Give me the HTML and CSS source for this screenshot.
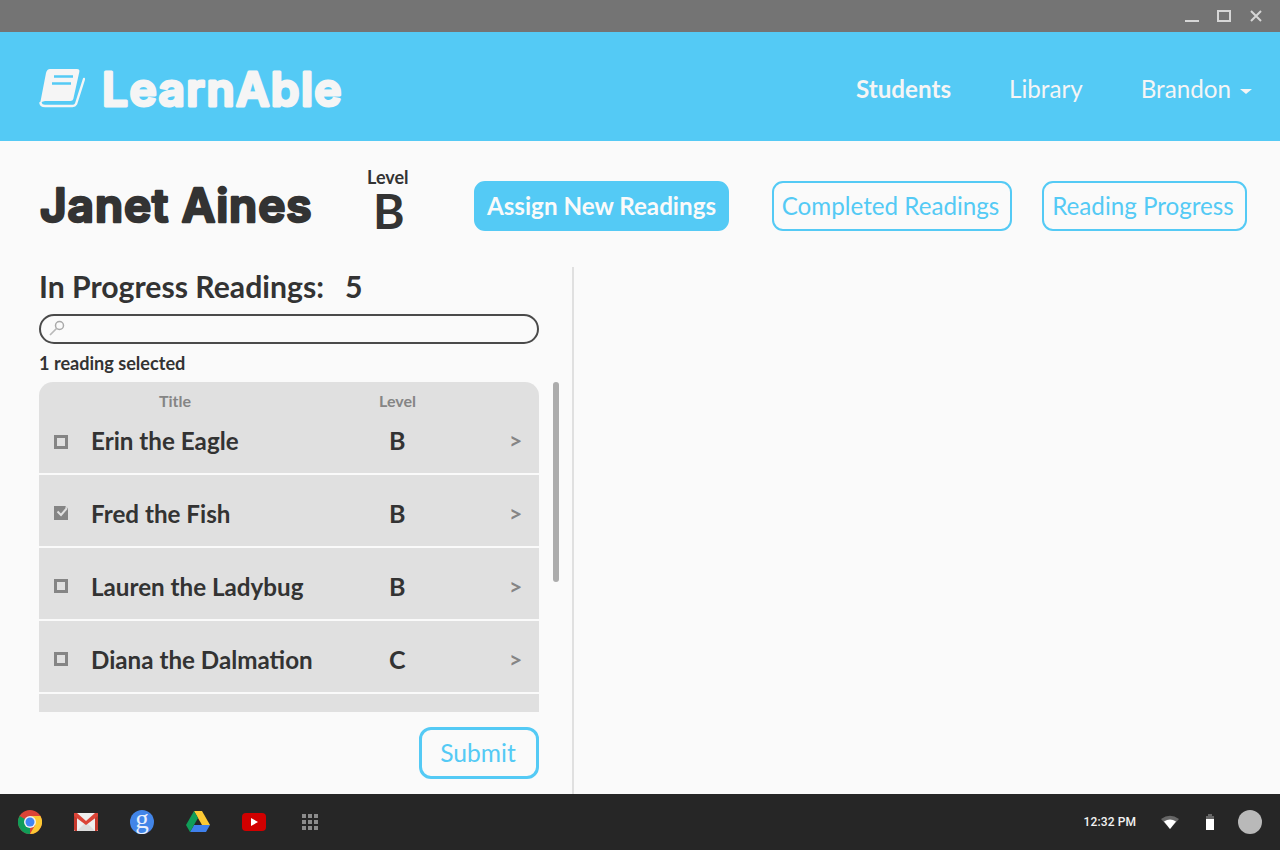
FILE: index.html
```html
<!DOCTYPE html>
<html lang="en">
  <head>
    <meta charset="UTF-8" />
    <title>LearnAble</title>
    <link rel="stylesheet" href="styles.css">
  </head>
  <body>
    <div class="titlebar">
      <span class="win-min"></span>
      <span class="win-max"></span>
      <svg class="win-close" width="12" height="12" viewBox="0 0 12 12"><path d="M1 1l10 10M11 1L1 11" stroke="#d6d6d6" stroke-width="2"/></svg>
    </div>

    <header class="topbar">
      <div class="brand">
        <svg class="brand-icon" width="46" height="40" viewBox="0 0 46 40">
          <path d="M11 1h27q3 0 2.300 3l-6 27q-.5 2-3 2H6q-3 0-5 3L7 5q1-4 4-4z" fill="#f5f5f5"/>
          <path d="M15 8.500h19M13 15.500h19" stroke="#54caf5" stroke-width="2.400"/>
          <path d="M45 11l-8 25q-1 2-3.500 2H6q-4 0-4.500-3" fill="none" stroke="#f5f5f5" stroke-width="2.400" stroke-linecap="round"/>
        </svg>
        <svg class="brand-name" width="250" height="64"><text x="2" y="51">LearnAble</text></svg>
      </div>
      <nav class="nav">
        <a class="nav-active">Students</a>
        <a>Library</a>
        <a>Brandon<i class="caret"></i></a>
      </nav>
    </header>

    <main class="content">
      <section class="student">
        <h1 class="student-name">
          <svg width="328" height="64"><text x="1" y="48">Janet Aines</text></svg>
        </h1>
        <div class="student-level">
          <span>Level</span>
          <b>B</b>
        </div>
        <button class="btn btn-filled btn-assign">Assign New Readings</button>
        <button class="btn btn-completed">Completed Readings</button>
        <button class="btn btn-progress">Reading Progress</button>
      </section>

      <div class="columns">
        <section class="readings">
          <h2 class="readings-title">In Progress Readings:<span>5</span></h2>
          <div class="search">
            <svg width="18" height="18" viewBox="0 0 18 18"><circle cx="11.500" cy="6.500" r="4" fill="none" stroke="#a9a9a9" stroke-width="1.500"/><path d="M8.500 9.500L2 16" stroke="#b9b9b9" stroke-width="1.700"/></svg>
          </div>
          <p class="selected-count">1 reading selected</p>

          <div class="list-wrap">
            <div class="list">
              <div class="row row-first">
                <div class="list-head"><span class="head-title">Title</span><span class="head-level">Level</span></div>
                <i class="check"></i><span class="row-title">Erin the Eagle</span><span class="row-level">B</span><span class="row-go">&gt;</span>
              </div>
              <div class="row">
                <svg class="check-on" width="14" height="14" viewBox="0 0 14 14"><path d="M0 0h12l-1 1.500 3 .5V14H0z" fill="#858585"/><path d="M3.500 5.500L7 9l6-7" fill="none" stroke="#e0e0e0" stroke-width="2"/></svg>
                <span class="row-title">Fred the Fish</span><span class="row-level">B</span><span class="row-go">&gt;</span>
              </div>
              <div class="row">
                <i class="check"></i><span class="row-title">Lauren the Ladybug</span><span class="row-level">B</span><span class="row-go">&gt;</span>
              </div>
              <div class="row">
                <i class="check"></i><span class="row-title">Diana the Dalmation</span><span class="row-level">C</span><span class="row-go">&gt;</span>
              </div>
              <div class="row row-cut"></div>
            </div>
            <div class="scrollbar"></div>
          </div>

          <div class="submit-row"><button class="btn btn-submit">Submit</button></div>
        </section>
        <section class="detail"></section>
      </div>
    </main>

    <footer class="shelf">
      <svg class="app" width="24" height="24" viewBox="0 0 48 48">
        <circle cx="24" cy="24" r="24" fill="#dc4437"/>
        <path d="M24 24L3.200 12A24 24 0 0 0 24 48z" fill="#109d58"/>
        <path d="M24 12h20.800A24 24 0 0 1 24 48l10.400-18z" fill="#fcc934"/>
        <circle cx="24" cy="24" r="12" fill="#f1f1f1"/>
        <circle cx="24" cy="24" r="9" fill="#4285f4"/>
      </svg>
      <svg class="app" width="24" height="24" viewBox="0 0 24 24">
        <path d="M0 3h24v18H0z" fill="#efefef"/>
        <path d="M3 21l9-9 9 9z" fill="#dcdcdc"/>
        <path d="M0 3h3v18H1.500Q0 21 0 19.500zM24 3h-3v18h1.500q1.500 0 1.500-1.500z" fill="#c5392d"/>
        <path d="M0 4q0-1 1-1h2l9 8 9-8h2q1 0 1 1v2L12 15 0 6z" fill="#db4437"/>
      </svg>
      <span class="app app-g">g</span>
      <svg class="app" width="24" height="24" viewBox="0 0 24 24">
        <path d="M8 1h8l8 14h-8z" fill="#fcc934"/>
        <path d="M8 15h16l-4 7H4z" fill="#3f80ec"/>
        <path d="M8 1l4 7-8 14-4-7z" fill="#109d58"/>
      </svg>
      <svg class="app" width="24" height="24" viewBox="0 0 24 24">
        <rect y="3" width="24" height="18" rx="4" fill="#d10000"/>
        <path d="M9 8l7 4-7 4z" fill="#fff"/>
      </svg>
      <div class="app app-grid"><i></i><i></i><i></i><i></i><i></i><i></i><i></i><i></i><i></i></div>

      <div class="tray">
        <span class="clock">12:32 PM</span>
        <svg class="wifi" width="18" height="14" viewBox="0 0 18 14"><path d="M0 4Q9-2.500 18 4L9 14z" fill="#666"/><path d="M3 6.500Q9 2.500 15 6.500L9 14z" fill="#fff"/></svg>
        <svg class="battery" width="8" height="16" viewBox="0 0 8 16"><path d="M2 0h4v2H2z" fill="#666"/><path d="M0 2h8v3H0z" fill="#666"/><path d="M0 5h8v11H0z" fill="#fff"/></svg>
        <span class="avatar"></span>
      </div>
    </footer>
  </body>
</html>
```

FILE: styles.css
```css
* {
  box-sizing: border-box;
}
html, body {
  height: 100%;
}
body {
  margin: 0;
  overflow: hidden;
  display: flex;
  flex-direction: column;
  background: #fafafa;
  color: #333;
  font-family: 'Lato', sans-serif;
}

/* window chrome */
.titlebar {
  height: 32px;
  flex: none;
  display: flex;
  align-items: center;
  justify-content: flex-end;
  background: #747474;
  padding-right: 18px;
}
.win-min {
  width: 14px;
  height: 2px;
  margin-top: 10px;
  background: #d6d6d6;
}
.win-max {
  width: 14px;
  height: 12px;
  margin-left: 18px;
  border: 2px solid #d6d6d6;
}
.win-close {
  margin-left: 19px;
}

/* app header */
.topbar {
  height: 109px;
  flex: none;
  display: flex;
  align-items: center;
  justify-content: space-between;
  background: #54caf5;
  padding: 0 28px 0 39px;
}
.brand {
  display: flex;
  align-items: center;
  gap: 15px;
}
.brand-icon {
  margin-top: 3px;
}
.brand-name,
.student-name svg {
  display: block;
  font-family: 'Inter', sans-serif;
  font-weight: 600;
  stroke-linejoin: round;
}
.brand-name text {
  font-size: 46px;
  letter-spacing: 1.400px;
  fill: #f5f5f5;
  stroke: #f5f5f5;
  stroke-width: 3px;
}
.nav {
  display: flex;
  gap: 58px;
  margin-top: 4px;
  font-size: 24.200px;
  color: #f5f5f5;
}
.nav-active {
  font-weight: 700;
}
.caret {
  display: inline-block;
  margin-left: 9px;
  vertical-align: 4px;
  border-top: 5px solid #f5f5f5;
  border-left: 6px solid transparent;
  border-right: 6px solid transparent;
}

/* student row */
.content {
  flex: 1;
  display: flex;
  flex-direction: column;
  min-height: 0;
  padding-left: 39px;
}
.student {
  height: 126px;
  flex: none;
  display: flex;
  align-items: center;
  padding-top: 4px;
}
.student-name {
  width: 328px;
  margin: 0;
}
.student-name text {
  font-size: 46px;
  letter-spacing: .9px;
  fill: #333;
  stroke: #333;
  stroke-width: 2.600px;
}
.student-level {
  width: 107px;
  display: flex;
  flex-direction: column;
  margin-top: -14px;
}
.student-level span {
  font-size: 18px;
  font-weight: 700;
  line-height: 20px;
}
.student-level b {
  font-size: 48px;
  line-height: 42px;
  margin-top: 3px;
  padding-left: 6px;
}
.btn {
  height: 50px;
  padding: 0 0 2px;
  border: 2px solid #54caf5;
  border-radius: 11px;
  background: transparent;
  color: #54caf5;
  font-family: inherit;
  font-size: 24.200px;
}
.btn-filled {
  background: #54caf5;
  color: #fafafa;
  font-weight: 700;
}
.btn-assign {
  width: 255px;
}
.btn-completed {
  width: 240px;
  margin-left: 43px;
  padding-right: 3px;
}
.btn-progress {
  width: 205px;
  margin-left: 30px;
  padding-right: 3px;
}

/* columns */
.columns {
  flex: 1;
  display: flex;
  min-height: 0;
}
.readings {
  width: 535px;
  flex: none;
  border-right: 2px solid #e0e0e0;
}
.detail {
  flex: 1;
}
.readings-title {
  margin: 0;
  font-size: 30.200px;
  font-weight: 700;
  line-height: 38px;
}
.readings-title span {
  margin-left: 21px;
}
.search {
  width: 500px;
  height: 30px;
  margin-top: 9px;
  border: 2px solid #4a4a4a;
  border-radius: 15px;
  padding: 3px 0 0 7px;
}
.search svg {
  display: block;
}
.selected-count {
  margin: 9px 0;
  font-size: 18.100px;
  font-weight: 700;
  line-height: 20px;
}

/* reading list */
.list-wrap {
  position: relative;
  height: 330px;
}
.list {
  width: 500px;
  height: 330px;
  overflow: hidden;
  border-radius: 14px 14px 0 0;
  display: flex;
  flex-direction: column;
  gap: 2px;
}
.row {
  position: relative;
  height: 71px;
  flex: none;
  display: flex;
  align-items: center;
  background: #e0e0e0;
  padding: 4px 0 0 15px;
}
.row-first {
  height: 91px;
  padding-top: 24px;
}
.row-first .check {
  margin-top: 4px;
}
.row-cut {
  height: 20px;
}
.list-head {
  position: absolute;
  top: 9px;
  left: 0;
  right: 0;
  font-size: 16px;
  font-weight: 700;
  color: #858585;
  line-height: 19px;
}
.head-title {
  position: absolute;
  left: 120px;
}
.head-level {
  position: absolute;
  left: 340px;
}
.check {
  width: 14px;
  height: 14px;
  flex: none;
  border: 3px solid #858585;
}
.check-on {
  flex: none;
}
.row-title {
  width: 298px;
  margin: 2px 0 0 23px;
  font-size: 24.200px;
  font-weight: 700;
}
.row-level {
  width: 120px;
  font-size: 25px;
  font-weight: 700;
}
.row-go {
  font-size: 23px;
  font-weight: 700;
  color: #858585;
}
.scrollbar {
  position: absolute;
  top: 0;
  left: 514px;
  width: 6px;
  height: 200px;
  border-radius: 3px;
  background: #acacac;
}
.submit-row {
  width: 500px;
  display: flex;
  justify-content: flex-end;
  margin-top: 15px;
}
.btn-submit {
  width: 120px;
  height: 52px;
  padding-right: 2px;
  border-width: 3px;
  border-radius: 12px;
  font-size: 24.600px;
}

/* chromeos shelf */
.shelf {
  height: 56px;
  flex: none;
  display: flex;
  align-items: center;
  gap: 32px;
  background: #262626;
  padding: 0 18px;
}
.app {
  flex: none;
  display: block;
}
.app-g {
  width: 24px;
  height: 24px;
  border-radius: 50%;
  background: #4285e8;
  color: #e8effc;
  font-family: 'Liberation Serif', serif;
  font-size: 27px;
  line-height: 19px;
  text-align: center;
}
.app-grid {
  width: 16px;
  height: 16px;
  margin-left: 4px;
  display: grid;
  grid-template-columns: repeat(3, 4px);
  grid-auto-rows: 4px;
  gap: 2px;
}
.app-grid i {
  background: #8c8c8c;
}
.tray {
  margin-left: auto;
  display: flex;
  align-items: center;
}
.clock {
  font-family: 'Roboto', sans-serif;
  font-size: 12px;
  font-weight: 500;
  letter-spacing: .1px;
  color: #f2f2f2;
}
.wifi {
  margin-left: 25px;
}
.battery {
  margin-left: 27px;
}
.avatar {
  width: 24px;
  height: 24px;
  margin-left: 24px;
  border-radius: 50%;
  background: #b9b9b9;
}
```
